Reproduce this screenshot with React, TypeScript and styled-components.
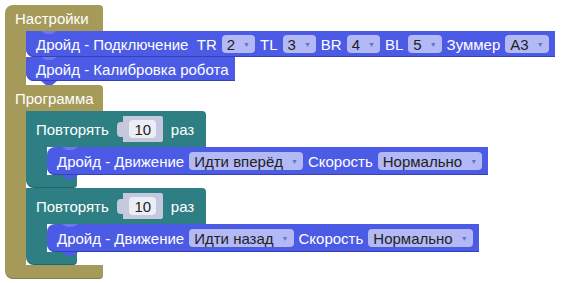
import { FC } from "react";
import styled, { createGlobalStyle } from "styled-components";

const OLIVE = "#a69a5b";
const BLUE = "#4c5be6";
const TEAL = "#2e7f83";

const GlobalStyle = createGlobalStyle`
  body {
    margin: 0;
    background: #fff;
    font-family: "Liberation Sans", Arial, sans-serif;
  }
`;

const Workspace = styled.div`
  padding: 5px;
  width: 561px;
  height: 283px;
  box-sizing: border-box;
  overflow: hidden;
`;

const Block = styled.div`
  display: flex;
  flex-direction: column;
  width: max-content;
  position: relative;
`;

const Label = styled.div<{ $color: string; $width: number; $height: number; $round?: boolean }>`
  position: relative;
  display: flex;
  align-items: center;
  gap: 8px;
  box-sizing: border-box;
  width: ${(p) => p.$width}px;
  height: ${(p) => p.$height}px;
  padding-left: 10px;
  background: ${(p) => p.$color};
  color: #fff;
  font-size: 15px;
  border-radius: ${(p) => (p.$round ? "8px 4px 0 0" : "0 4px 0 0")};
  white-space: nowrap;
`;

const Mouth = styled.div`
  display: flex;
`;

const Spine = styled.div<{ $color: string }>`
  width: 21px;
  background: ${(p) => p.$color};
  flex-shrink: 0;
`;

const Stack = styled.div<{ $gap?: number }>`
  display: flex;
  flex-direction: column;
  padding-bottom: ${(p) => p.$gap ?? 0}px;
`;

const Arm = styled.div<{ $color: string; $width: number; $height: number; $tab?: boolean }>`
  position: relative;
  width: ${(p) => p.$width}px;
  height: ${(p) => p.$height}px;
  background: ${(p) => p.$color};
  border-radius: 0 0 4px 8px;
  box-shadow: inset 0 -1px 0 rgba(0, 0, 0, 0.2);
  &::after {
    content: "";
    display: ${(p) => (p.$tab ? "block" : "none")};
    position: absolute;
    left: 15px;
    bottom: -4px;
    width: 16px;
    height: 4px;
    background: ${(p) => p.$color};
    clip-path: polygon(0 0, 100% 0, 70% 100%, 30% 100%);
  }
`;

const Statement = styled.div<{ $height: number; $rounded?: boolean }>`
  position: relative;
  display: flex;
  align-items: center;
  gap: 5px;
  width: max-content;
  height: ${(p) => p.$height}px;
  padding: 0 6px 0 10px;
  background: ${BLUE};
  color: #fff;
  font-size: 15px;
  white-space: nowrap;
  border-radius: ${(p) => (p.$rounded ? "8px 0 0 8px" : "0 0 0 8px")};
  box-shadow: inset 0 -1px 0 #3541b4;
  z-index: 1;
  &::before {
    content: "";
    position: absolute;
    left: 15px;
    top: 0;
    width: 16px;
    height: 3px;
    background: rgba(255, 255, 255, 0.18);
    clip-path: polygon(0 0, 100% 0, 70% 100%, 30% 100%);
  }
  &::after {
    content: "";
    position: absolute;
    left: 15px;
    bottom: -4px;
    width: 16px;
    height: 4px;
    background: ${BLUE};
    clip-path: polygon(0 0, 100% 0, 70% 100%, 30% 100%);
  }
`;

const Dropdown = styled.span`
  display: inline-flex;
  align-items: center;
  height: 18px;
  padding: 0 5px;
  border-radius: 4px;
  background: #b3b9f5;
  color: #222;
  font-size: 15px;
`;

const Arrow = styled.span`
  margin-left: 8px;
  font-size: 7px;
  color: #6570d8;
`;

const Slot = styled.div`
  display: flex;
  align-items: center;
`;

const SlotTab = styled.div`
  width: 6px;
  height: 15px;
  background: #c6c8dd;
  border-radius: 4px 0 0 4px;
`;

const SlotBody = styled.div`
  display: flex;
  align-items: center;
  justify-content: center;
  width: 40px;
  height: 26px;
  background: #c6c8dd;
  border-radius: 0 2px 2px 0;
`;

const NumberField = styled.span`
  display: flex;
  align-items: center;
  justify-content: center;
  width: 27px;
  height: 18px;
  border-radius: 4px;
  background: #eceef5;
  color: #222;
  font-size: 15px;
`;

const Pick: FC<{ value: string }> = ({ value }) => (
  <Dropdown>
    {value}
    <Arrow>▼</Arrow>
  </Dropdown>
);

const Repeat: FC<{ direction: string }> = ({ direction }) => (
  <Block>
    <Label $color={TEAL} $width={180} $height={36}>
      Повторять
      <Slot>
        <SlotTab />
        <SlotBody>
          <NumberField>10</NumberField>
        </SlotBody>
      </Slot>
      раз
    </Label>
    <Mouth>
      <Spine $color={TEAL} />
      <Stack>
        <Statement $height={28} $rounded>
          Дройд - Движение <Pick value={direction} /> Скорость <Pick value="Нормально" />
        </Statement>
      </Stack>
    </Mouth>
    <Arm $color={TEAL} $width={51} $height={13} $tab />
  </Block>
);

export default function App() {
  return (
    <>
      <GlobalStyle />
      <Workspace>
        <Block>
          <Label $color={OLIVE} $width={98} $height={26} $round>
            Настройки
          </Label>
          <Mouth>
            <Spine $color={OLIVE} />
            <Stack $gap={4}>
              <Statement $height={26}>
                Дройд - Подключение&nbsp; TR <Pick value="2" /> TL <Pick value="3" /> BR{" "}
                <Pick value="4" /> BL <Pick value="5" /> Зуммер <Pick value="A3" />
              </Statement>
              <Statement $height={24}>Дройд - Калибровка робота</Statement>
            </Stack>
          </Mouth>
          <Label $color={OLIVE} $width={98} $height={26}>
            Программа
          </Label>
          <Mouth>
            <Spine $color={OLIVE} />
            <Stack>
              <Repeat direction="Идти вперёд" />
              <Repeat direction="Идти назад" />
            </Stack>
          </Mouth>
          <Arm $color={OLIVE} $width={98} $height={14} />
        </Block>
      </Workspace>
    </>
  );
}
